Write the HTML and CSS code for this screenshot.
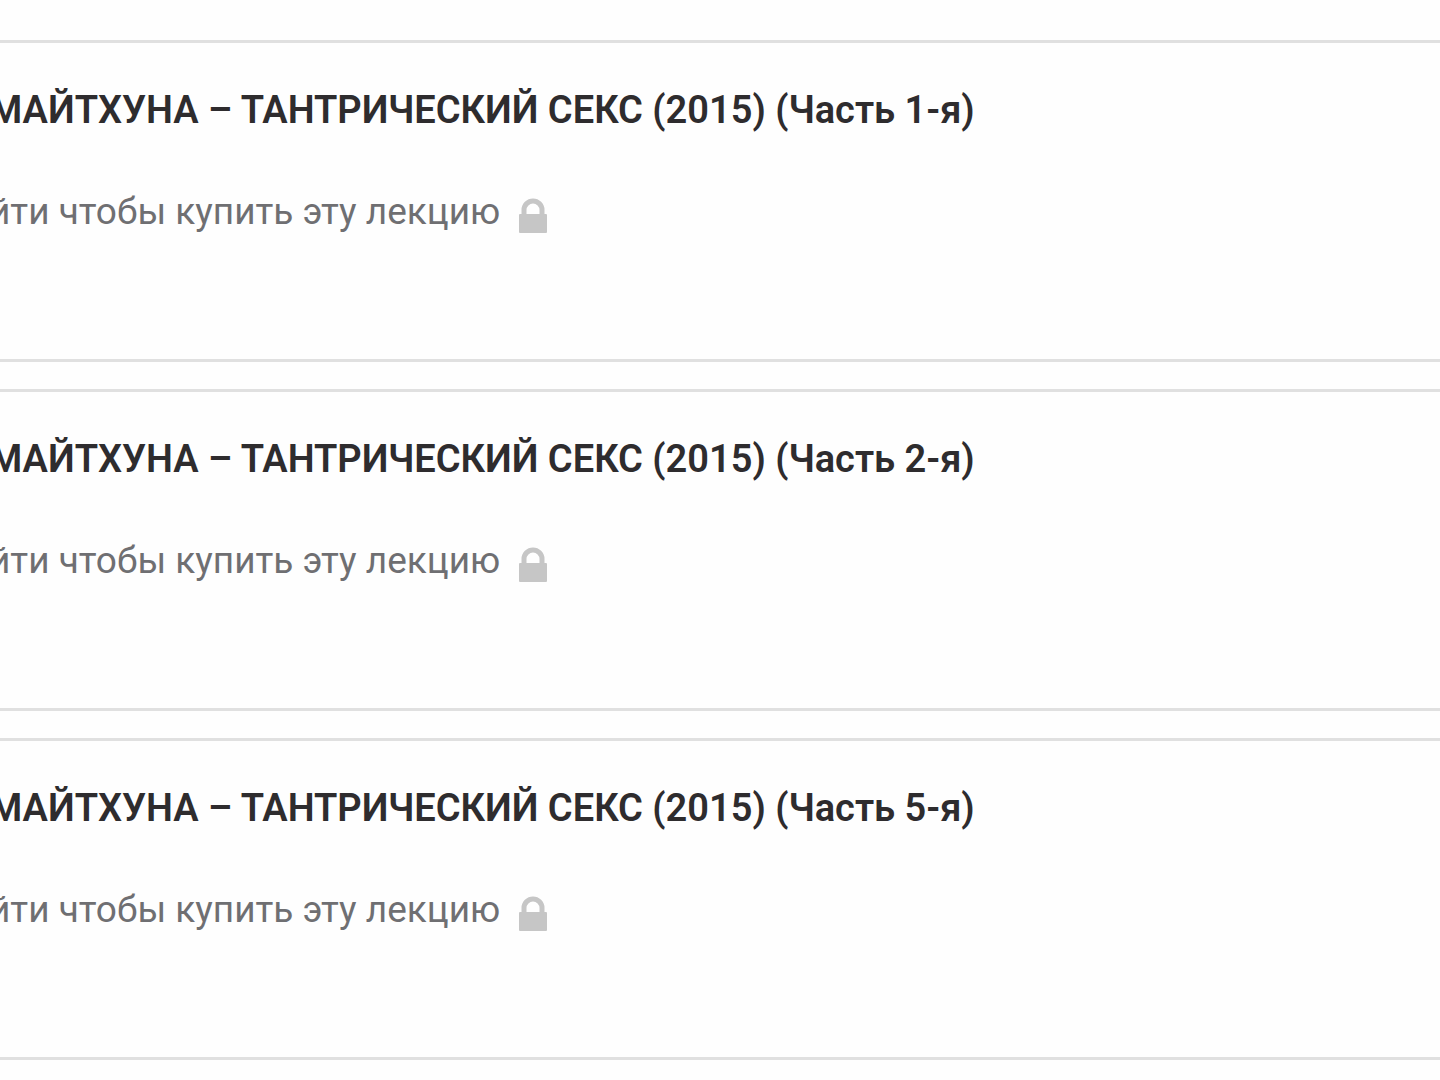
FILE: index.html
```html
<!DOCTYPE html>
<html lang="ru">
<head>
    <meta charset="utf-8">
    <title>Лекции</title>
    <link rel="stylesheet" href="styles.css">
</head>
<body>
    <main class="lectures">
        <article class="lecture">
            <h2>МАЙТХУНА – ТАНТРИЧЕСКИЙ СЕКС (2015) (Часть 1-я)</h2>
            <a class="buy" href="#">йти чтобы купить эту лекцию
                <svg class="lock" viewBox="0 0 30 36" aria-hidden="true">
                    <path class="shackle" d="M6 18V12a9 9 0 0 1 18 0v6"/>
                    <rect x="1" y="16" width="28" height="19" rx="1"/>
                </svg>
            </a>
        </article>
        <article class="lecture">
            <h2>МАЙТХУНА – ТАНТРИЧЕСКИЙ СЕКС (2015) (Часть 2-я)</h2>
            <a class="buy" href="#">йти чтобы купить эту лекцию
                <svg class="lock" viewBox="0 0 30 36" aria-hidden="true">
                    <path class="shackle" d="M6 18V12a9 9 0 0 1 18 0v6"/>
                    <rect x="1" y="16" width="28" height="19" rx="1"/>
                </svg>
            </a>
        </article>
        <article class="lecture">
            <h2>МАЙТХУНА – ТАНТРИЧЕСКИЙ СЕКС (2015) (Часть 5-я)</h2>
            <a class="buy" href="#">йти чтобы купить эту лекцию
                <svg class="lock" viewBox="0 0 30 36" aria-hidden="true">
                    <path class="shackle" d="M6 18V12a9 9 0 0 1 18 0v6"/>
                    <rect x="1" y="16" width="28" height="19" rx="1"/>
                </svg>
            </a>
        </article>
    </main>
</body>
</html>
```
FILE: styles.css
```css
body {
    margin: 0;
    background-color: #fefefe;
    font-family: Roboto, sans-serif;
    overflow-x: hidden;
}

.lectures {
    display: flex;
    flex-direction: column;
    gap: 27px;
    padding: 40px 0 20px;
}

.lecture {
    border-top: 3px solid #e0e0e0;
    border-bottom: 3px solid #e0e0e0;
    padding: 44px 0 124px;
}

.lecture h2 {
    margin: 0 0 56px -11px;
    color: #2e2c2e;
    font-size: 38px;
    font-weight: 600;
    line-height: 46px;
    white-space: nowrap;
}

.buy {
    display: flex;
    align-items: center;
    gap: 18px;
    margin-left: -11px;
    color: #6f6f72;
    font-size: 37px;
    line-height: 46px;
    text-decoration: none;
}

.lock {
    width: 30px;
    height: 36px;
    margin-top: 8px;
    fill: #c6c6c6;
}

.shackle {
    fill: none;
    stroke: #c6c6c6;
    stroke-width: 5;
}
```
